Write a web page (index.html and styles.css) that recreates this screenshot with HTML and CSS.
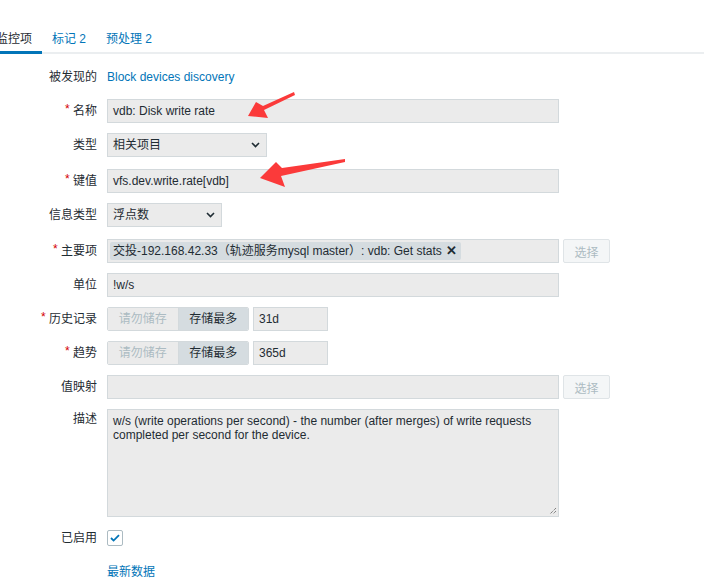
FILE: index.html
```html
<!DOCTYPE html>
<html lang="zh-CN">
<head>
    <meta charset="UTF-8">
    <title>监控项</title>
    <link rel="stylesheet" href="styles.css">
</head>
<body>
    <ul class="tabs">
        <li class="tab active">监控项</li>
        <li class="tab">标记 2</li>
        <li class="tab">预处理 2</li>
    </ul>

    <div class="form">
        <div class="label">被发现的</div>
        <div class="field"><a class="link">Block devices discovery</a></div>

        <div class="label"><span class="req">*</span> 名称</div>
        <div class="field"><div class="input wide">vdb: Disk write rate</div></div>

        <div class="label">类型</div>
        <div class="field">
            <div class="input select type">相关项目
                <svg class="chev" width="9" height="6" viewBox="0 0 9 6"><path d="M1 1l3.5 3.5L8 1" fill="none" stroke="#1f2c33" stroke-width="1.6"/></svg>
            </div>
        </div>

        <div class="label"><span class="req">*</span> 键值</div>
        <div class="field"><div class="input wide">vfs.dev.write.rate[vdb]</div></div>

        <div class="label">信息类型</div>
        <div class="field">
            <div class="input select info">浮点数
                <svg class="chev" width="9" height="6" viewBox="0 0 9 6"><path d="M1 1l3.5 3.5L8 1" fill="none" stroke="#1f2c33" stroke-width="1.6"/></svg>
            </div>
        </div>

        <div class="label"><span class="req">*</span> 主要项</div>
        <div class="field">
            <div class="input wide multi">
                <span class="chip">交投-192.168.42.33（轨迹服务mysql master）: vdb: Get stats <span class="x">✕</span></span>
            </div>
            <button class="btn" disabled>选择</button>
        </div>

        <div class="label">单位</div>
        <div class="field"><div class="input wide">!w/s</div></div>

        <div class="label"><span class="req">*</span> 历史记录</div>
        <div class="field">
            <div class="seg"><span class="off">请勿储存</span><span class="on">存储最多</span></div>
            <div class="input short">31d</div>
        </div>

        <div class="label"><span class="req">*</span> 趋势</div>
        <div class="field">
            <div class="seg"><span class="off">请勿储存</span><span class="on">存储最多</span></div>
            <div class="input short">365d</div>
        </div>

        <div class="label">值映射</div>
        <div class="field">
            <div class="input wide"></div>
            <button class="btn" disabled>选择</button>
        </div>

        <div class="label top">描述</div>
        <div class="field">
            <div class="input wide area">w/s (write operations per second) - the number (after merges) of write requests completed per second for the device.
                <svg class="grip" width="8" height="8" viewBox="0 0 8 8"><path d="M7 1L1 7M7 4L4 7" stroke="#555" stroke-width="1" stroke-dasharray="1 1"/></svg>
            </div>
        </div>

        <div class="label enabled">已启用</div>
        <div class="field enabled">
            <span class="check">
                <svg width="12" height="10" viewBox="0 0 12 10"><path d="M2 5l2.6 2.6L10 2.2" fill="none" stroke="#0275b8" stroke-width="1.8"/></svg>
            </span>
        </div>

        <div class="label"></div>
        <div class="field latest"><a class="link">最新数据</a></div>
    </div>

    <svg class="arrows" width="704" height="578" viewBox="0 0 704 578">
        <polygon points="294,92 263,106 256,102 248,116 268,118 264,110 295,95" fill="#fb3a3a"/>
        <polygon points="345,159 282,168 276,162 260,178 285,187 281,176 345,162" fill="#fb3a3a"/>
    </svg>
</body>
</html>
```

FILE: styles.css
```css
body {
    margin: 0;
    font-family: "Liberation Sans", Arial, "Noto Sans CJK SC", sans-serif;
    font-size: 12px;
    color: #1f2c33;
    background: #fff;
    overflow: hidden;
    position: relative;
}
.tabs {
    list-style: none;
    margin: 0 0 0 -14px;
    padding: 25px 0 0;
    display: flex;
    border-bottom: 2px solid #ebeef0;
    height: 27px;
}
.tab {
    padding: 0 10px;
    line-height: 28px;
    height: 28px;
    color: #0275b8;
}
.tab.active {
    color: #1f2c33;
    border-bottom: 3px solid #0275b8;
    height: 26px;
}
.form {
    display: grid;
    grid-template-columns: 97px 1fr;
    column-gap: 10px;
    row-gap: 10px;
    padding-top: 11px;
}
.label {
    text-align: right;
    min-height: 24px;
    line-height: 24px;
    white-space: nowrap;
}
.label.top {
    line-height: 20px;
}
.req {
    color: #d40000;
    position: relative;
    top: -2px;
}
.field {
    display: flex;
    align-items: flex-start;
    min-height: 24px;
}
.link {
    color: #0275b8;
    line-height: 24px;
}
.input {
    box-sizing: border-box;
    height: 24px;
    line-height: 22px;
    padding: 0 5px;
    background: #ebebeb;
    border: 1px solid #d3d9dc;
    white-space: nowrap;
}
.wide {
    width: 452px;
}
.select {
    position: relative;
    margin-bottom: 2px;
}
.select.type {
    width: 160px;
}
.select.info {
    width: 115px;
}
.chev {
    position: absolute;
    right: 6px;
    top: 8px;
}
.multi {
    padding: 2px;
    line-height: 18px;
}
.chip {
    display: inline-block;
    background: #d5dce0;
    border-radius: 2px;
    padding: 0 4px 0 3px;
    line-height: 18px;
}
.x {
    font-size: 13px;
    font-weight: bold;
    margin-left: 1px;
}
.btn {
    box-sizing: border-box;
    width: 47px;
    height: 24px;
    margin-left: 4px;
    background: #f4f6f7;
    border: 1px solid #dfe4e7;
    border-radius: 2px;
    color: #acbbc2;
    font: inherit;
    padding: 0;
}
.seg {
    display: flex;
    box-sizing: border-box;
    height: 24px;
    width: 142px;
    border: 1px solid #d3d9dc;
    border-radius: 2px;
    overflow: hidden;
}
.seg span {
    flex: 1;
    text-align: center;
    line-height: 22px;
}
.seg .off {
    background: #ebebeb;
    color: #acbbc2;
}
.seg .on {
    background: #d5dce0;
    border-left: 1px solid #d3d9dc;
}
.short {
    width: 75px;
    margin-left: 4px;
}
.area {
    height: 108px;
    white-space: normal;
    line-height: 14px;
    padding: 4px 5px;
    position: relative;
}
.grip {
    position: absolute;
    right: 1px;
    bottom: 1px;
}
.label.enabled {
    margin-top: 3px;
    line-height: 16px;
    min-height: 16px;
}
.field.enabled {
    margin-top: 3px;
    min-height: 16px;
}
.check {
    box-sizing: border-box;
    width: 16px;
    height: 16px;
    border: 1px solid #acbbc2;
    border-radius: 2px;
    background: #fff;
    display: flex;
    align-items: center;
    justify-content: center;
}
.latest {
    margin-top: 4px;
}
.arrows {
    position: absolute;
    left: 0;
    top: 0;
    pointer-events: none;
}
```
